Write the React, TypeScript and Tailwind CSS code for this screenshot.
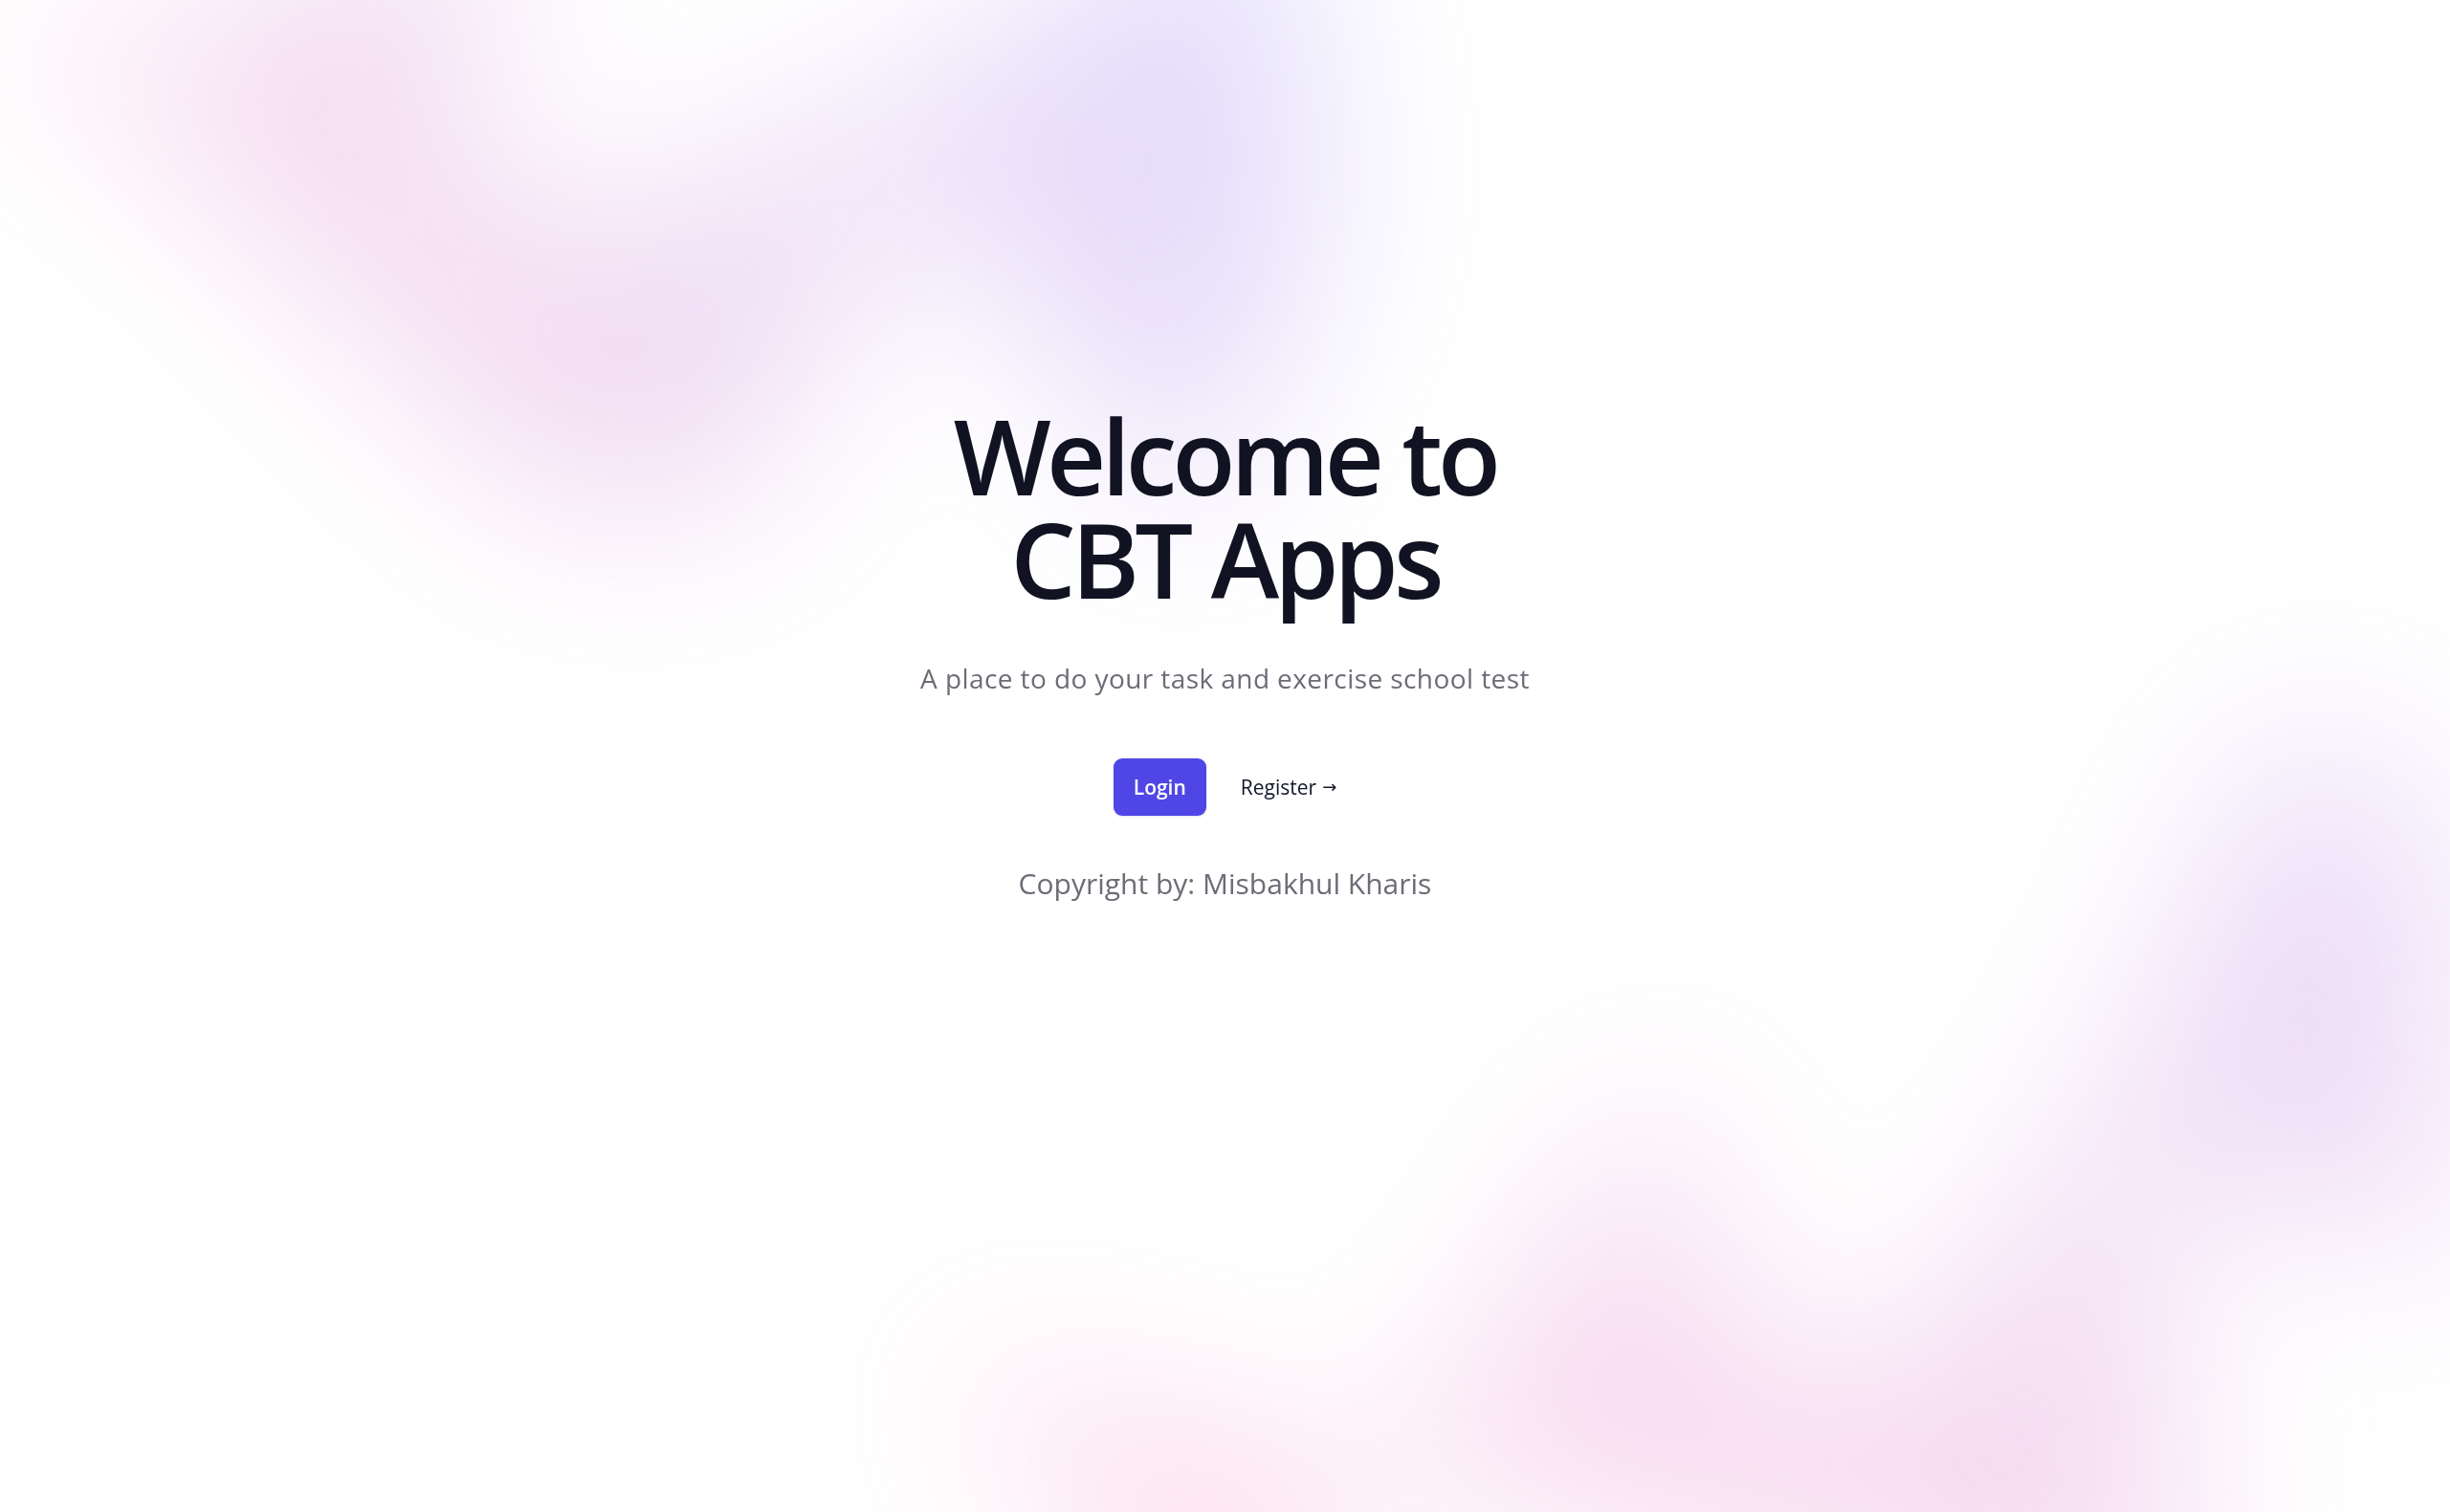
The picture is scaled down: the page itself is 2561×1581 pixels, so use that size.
export default function App() {
  return (
    <div className="relative isolate min-h-screen overflow-hidden bg-white font-['Open_Sans',sans-serif]">
      {/* top blob */}
      <div
        aria-hidden="true"
        className="absolute inset-x-0 top-[-480px] -z-10 transform-gpu overflow-hidden blur-[96px]"
      >
        <div className="relative left-[calc(50%-720px)] aspect-[1155/678] w-[1732px] -translate-x-1/2 rotate-[30deg] bg-gradient-to-tr from-[#ff80b5] to-[#9089fc] opacity-30 [clip-path:polygon(74.1%_44.1%,100%_61.6%,97.5%_26.9%,85.5%_0.1%,80.7%_2%,72.5%_32.5%,60.2%_62.4%,52.4%_68.1%,47.5%_58.3%,45.2%_34.5%,27.5%_76.7%,0.1%_64.9%,17.9%_100%,27.6%_76.8%,76.1%_97.7%,74.1%_44.1%)]" />
      </div>

      <div className="mx-auto flex max-w-[1200px] flex-col items-center px-9 pt-[423px] pb-[336px] text-center">
        <h1 className="text-[108px] leading-none font-semibold tracking-[-0.045em] text-[#111322]">
          Welcome to
          <br />
          CBT Apps
        </h1>
        <p className="mt-[46px] text-[28px] leading-[48px] font-medium tracking-[0.015em] text-[#6b6d76]">
          A place to do your task and exercise school test
        </p>
        <div className="mt-[60px] flex items-center justify-center gap-x-9">
          <a
            href="#"
            className="rounded-[9px] bg-[#4f46e5] px-[21px] py-[15px] text-[21px] leading-[30px] font-semibold text-white shadow-sm"
          >
            Login
          </a>
          <a href="#" className="flex items-center gap-x-[6px] text-[21px] leading-[30px] font-medium text-gray-900">
            Register
            <span aria-hidden="true" className="font-['DejaVu_Sans',sans-serif] text-[18px]">
              →
            </span>
          </a>
        </div>
        <p className="mt-[50px] text-[30px] leading-[42px] font-medium text-[#6b6d76]">
          Copyright by: Misbakhul Kharis
        </p>
      </div>

      {/* bottom blob */}
      <div
        aria-hidden="true"
        className="absolute inset-x-0 top-[calc(100%-820px)] -z-10 transform-gpu overflow-hidden blur-[96px]"
      >
        <div className="relative left-[calc(50%+560px)] aspect-[1155/678] w-[1732px] -translate-x-1/2 bg-gradient-to-tr from-[#ff80b5] to-[#b089f0] opacity-30 [clip-path:polygon(74.1%_44.1%,100%_61.6%,97.5%_26.9%,85.5%_0.1%,80.7%_2%,72.5%_32.5%,60.2%_62.4%,52.4%_68.1%,47.5%_58.3%,45.2%_34.5%,27.5%_76.7%,0.1%_64.9%,17.9%_100%,27.6%_76.8%,76.1%_97.7%,74.1%_44.1%)]" />
      </div>
    </div>
  );
}
